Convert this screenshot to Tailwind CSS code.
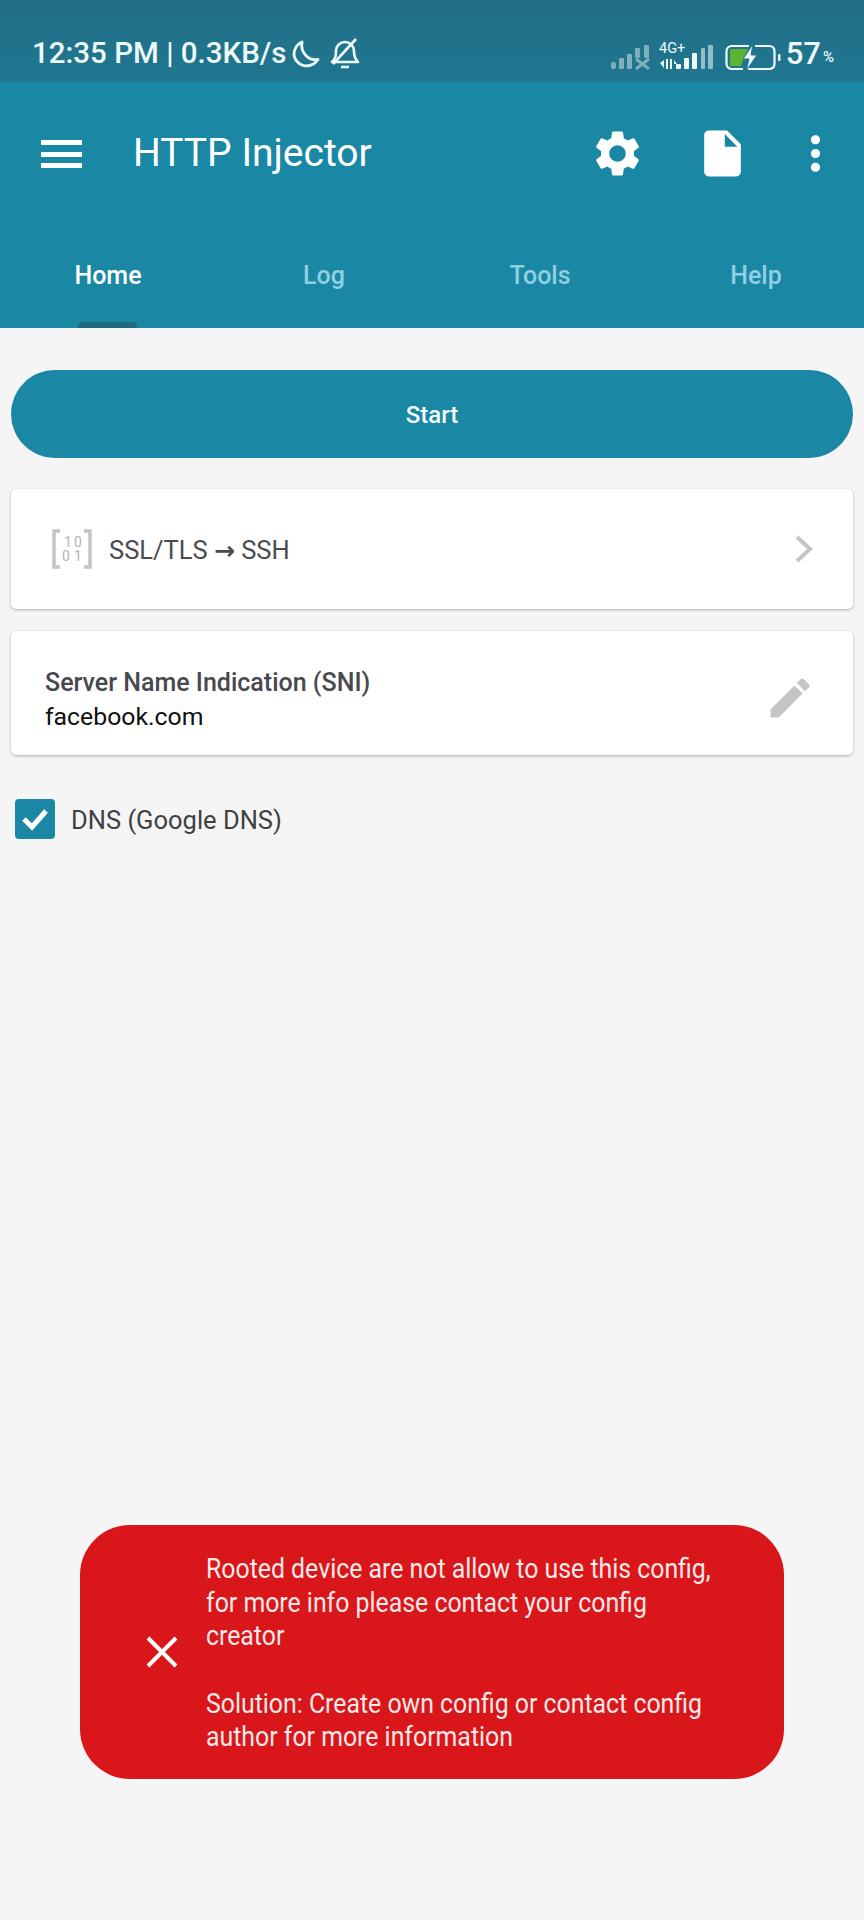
<!DOCTYPE html>
<html lang="en">

<head>
    <meta charset="UTF-8">
    <meta name="viewport" content="width=device-width, initial-scale=1.0">
    <title>HTTP Injector</title>
    <script src="https://cdn.jsdelivr.net/npm/@tailwindcss/browser@4"></script>
</head>

<body class="bg-[#f5f5f5] font-[Roboto,sans-serif]">
    <div class="relative h-[1920px] w-[864px] overflow-hidden">

        <!-- Status bar -->
        <div class="flex h-[82px] items-center bg-gradient-to-b from-[#226f86] to-[#1f7690] pt-[25px] pl-[32px] text-[#eefafa]">
            <span class="w-[253px] text-[29.500px] leading-none font-medium whitespace-nowrap">12:35 PM | 0.3KB/s</span>
            <svg class="ml-[5px] h-[30px] w-[30px]" viewBox="0 0 30 30" fill="none" stroke="currentColor" stroke-width="2.800">
                <path d="M12 3 C4 7 1.500 16 7 22.500 C13 29 23 28 28 20.500 C19 22 10 14 12 3Z" stroke-linejoin="round" />
            </svg>
            <svg class="ml-[9px] h-[32px] w-[32px]" viewBox="0 0 32 32" fill="none" stroke="currentColor" stroke-width="2.600">
                <path d="M3 24 C7 20 7 17 7 13 C7 8 11 4 16 4 C21 4 25 8 25 13 C25 18 26 21 29 24 Z" stroke-linejoin="round" />
                <path d="M27 1 L4 26" />
                <path d="M12 29 H20" />
            </svg>

            <!-- Signal icons, battery and percentage -->
            <div class="ml-auto flex items-center pr-[30px]">
                <svg class="h-[32px] w-[106px]" viewBox="0 0 106 32" fill="#eefafa">
                    <g opacity=".45">
                        <rect x="0" y="24" width="5" height="7" rx="2" />
                        <rect x="8" y="20" width="5" height="11" rx="1" />
                        <rect x="16" y="16" width="5" height="15" rx="1" />
                        <rect x="24" y="10" width="5" height="10" rx="1" />
                        <rect x="33" y="7" width="5" height="13" rx="1" />
                        <path d="M25 21 L38 31 M38 21 L25 31" stroke="#eefafa" stroke-width="3" />
                    </g>
                    <text x="48" y="15" font-size="14.500" font-family="Roboto">4G+</text>
                    <path d="M49 25 L53 22 V30Z M55 21 H57 V31 H55Z M59 21 H61 V31 H59Z M63 22 L66 26 H63Z" />
                    <rect x="65" y="26" width="5" height="5" rx="1" />
                    <rect x="73" y="20" width="5" height="11" rx="1" />
                    <rect x="81" y="15" width="5" height="16" rx="1" />
                    <rect x="90" y="10" width="4" height="21" rx="1" opacity=".55" />
                    <rect x="97" y="7" width="5" height="24" rx="1" opacity=".55" />
                </svg>
                <svg class="ml-[8px] h-[32px] w-[56px]" viewBox="0 0 56 32" fill="none">
                    <path d="M18 31 H7 C3.500 31 1.500 29 1.500 25.500 V13.500 C1.500 10 3.500 8 7 8 H24" stroke="#eefafa" stroke-width="2.200" />
                    <path d="M30 8 H44 C47.500 8 49.500 10 49.500 13.500 V25.500 C49.500 29 47.500 31 44 31 H23" stroke="#eefafa" stroke-width="2.200" />
                    <path d="M5 11 H23 L19 19 L16 28 H5Z" fill="#5cb32f" />
                    <path d="M28 6 L18 21 H24 L21 33 L32 17 H26Z" fill="#eefafa" stroke="#1f7690" stroke-width="1" />
                    <rect x="53" y="16" width="2.500" height="7" rx="1" fill="#eefafa" />
                </svg>
                <span class="ml-[5px] text-[31px] leading-none font-medium">57</span>
                <span class="ml-[2px] mt-[8px] text-[15px] leading-none font-medium">%</span>
            </div>
        </div>

        <!-- App bar -->
        <div class="h-[246px] bg-[#1a87a4] text-white">
            <div class="flex h-[143px] items-center pl-[41px] pr-[21px]">
                <svg class="h-[28px] w-[41px]" viewBox="0 0 41 28" fill="#fff">
                    <rect y="0" width="41" height="5" />
                    <rect y="12" width="41" height="5" />
                    <rect y="23" width="41" height="5" />
                </svg>
                <span class="ml-[51px] text-[39px] leading-none">HTTP Injector</span>
                <svg class="ml-auto h-[55px] w-[55px]" viewBox="0 0 24 24" fill="#fff">
                    <path d="M19.140 12.940c.04-.3.06-.61.06-.94 0-.32-.02-.64-.07-.94l2.030-1.580c.18-.14.23-.41.120-.61l-1.920-3.320c-.12-.22-.37-.29-.59-.22l-2.390.96c-.5-.38-1.030-.7-1.620-.94l-.36-2.540c-.04-.24-.24-.41-.48-.41h-3.840c-.24 0-.43.17-.47.41l-.36 2.540c-.59.24-1.130.57-1.620.94l-2.390-.96c-.22-.08-.47 0-.59.22L2.740 8.870c-.12.21-.08.47.12.61l2.030 1.580c-.05.3-.09.63-.09.94s.02.64.07.94l-2.030 1.580c-.18.14-.23.41-.12.61l1.920 3.320c.12.22.37.29.59.22l2.390-.96c.5.38 1.030.7 1.620.94l.36 2.540c.05.24.24.41.48.41h3.840c.24 0 .44-.17.47-.41l.36-2.540c.59-.24 1.130-.56 1.620-.94l2.390.96c.22.08.47 0 .59-.22l1.920-3.320c.12-.22.07-.47-.12-.61l-2.010-1.580zM12 15.600c-1.980 0-3.600-1.620-3.600-3.600s1.620-3.600 3.600-3.600 3.600 1.620 3.600 3.600-1.620 3.600-3.600 3.600z" />
                </svg>
                <svg class="ml-[50px] h-[55px] w-[55px]" viewBox="0 0 24 24" fill="#fff">
                    <path d="M6 2c-1.100 0-1.990.9-1.990 2L4 20c0 1.100.89 2 1.990 2H18c1.100 0 2-.9 2-2V8l-6-6H6zm7 7V3.500L18.500 9H13z" />
                </svg>
                <svg class="ml-[38px] h-[55px] w-[55px]" viewBox="0 0 24 24" fill="#fff">
                    <path d="M12 8c1.100 0 2-.9 2-2s-.9-2-2-2-2 .9-2 2 .9 2 2 2zm0 2c-1.100 0-2 .9-2 2s.9 2 2 2 2-.9 2-2-.9-2-2-2zm0 6c-1.100 0-2 .9-2 2s.9 2 2 2 2-.9 2-2-.9-2-2-2z" />
                </svg>
            </div>

            <!-- Tabs -->
            <div class="grid h-[103px] grid-cols-4 text-center text-[25px] font-medium text-[#8fd0e2]">
                <div class="relative pt-[35px] leading-[32px] text-white">
                    Home
                    <div class="absolute bottom-0 left-[78px] h-[6px] w-[59px] rounded-t-[5px] bg-[#1f6a7f]"></div>
                </div>
                <div class="pt-[35px] leading-[32px]">Log</div>
                <div class="pt-[35px] leading-[32px]">Tools</div>
                <div class="pt-[35px] leading-[32px]">Help</div>
            </div>
        </div>

        <!-- Main content -->
        <div class="px-[11px] pt-[42px]">
            <button class="block h-[88px] w-full rounded-full bg-[#1a87a4] pt-[2px] text-[24px] font-medium text-[#f4fbfc]">Start</button>

            <div class="mt-[31px] flex h-[120px] items-center rounded-[5px] bg-white pl-[41px] pr-[40px] shadow-[0_1px_3px_rgba(0,0,0,0.3)]">
                <svg class="h-[40px] w-[40px]" viewBox="0 0 40 40" fill="none">
                    <path d="M8 2 H2 V38 H8 M32 2 H38 V38 H32" stroke="#c4c4c4" stroke-width="3.500" />
                    <text x="12" y="18" font-size="14" font-family="Roboto" fill="#b5b5b5">1</text>
                    <text x="22" y="18" font-size="14" font-family="Roboto" fill="#b5b5b5">0</text>
                    <text x="10" y="32" font-size="14" font-family="Roboto" fill="#b5b5b5">0</text>
                    <text x="22" y="32" font-size="14" font-family="Roboto" fill="#b5b5b5">1</text>
                </svg>
                <span class="ml-[17px] pt-[3px] text-[25.500px] whitespace-nowrap text-[#4b4b50]">SSL/TLS <span class="font-['DejaVu_Sans'] text-[25px] font-bold">→</span> SSH</span>
                <svg class="ml-auto h-[28px] w-[18px]" viewBox="0 0 18 28" fill="none" stroke="#c4c4c4" stroke-width="4">
                    <path d="M2 2 L15 14 L2 26" />
                </svg>
            </div>

            <div class="mt-[22px] flex h-[124px] items-center rounded-[5px] bg-white pl-[34px] pr-[37px] shadow-[0_1px_3px_rgba(0,0,0,0.3)]">
                <div class="pt-[12px]">
                    <div class="text-[25px] leading-[34px] font-medium text-[#48484e]">Server Name Indication (SNI)</div>
                    <div class="text-[24.800px] leading-[33px] text-[#111111]">facebook.com</div>
                </div>
                <svg class="ml-auto mt-[9px] h-[52px] w-[52px]" viewBox="0 0 24 24" fill="#c4c4c4">
                    <path d="M3 17.250V21h3.750L17.810 9.940l-3.750-3.750L3 17.250zM20.710 7.040c.39-.39.39-1.020 0-1.410l-2.340-2.340c-.39-.39-1.020-.39-1.410 0l-1.830 1.830 3.750 3.750 1.830-1.830z" />
                </svg>
            </div>

            <label class="mt-[43px] flex items-center pl-[4px]">
                <span class="flex h-[40px] w-[40px] items-center justify-center rounded-[4px] bg-[#1a87a4]">
                    <svg class="h-[24px] w-[28px]" viewBox="0 0 28 24" fill="none" stroke="#fff" stroke-width="5">
                        <path d="M3 12 L11 20 L25 4" />
                    </svg>
                </span>
                <span class="ml-[16px] pt-[3px] text-[25.500px] text-[#3f3f45]">DNS (Google DNS)</span>
            </label>
        </div>

        <!-- Error toast -->
        <div class="absolute left-[80px] top-[1525px] flex h-[254px] w-[704px] items-center rounded-[50px] bg-[#d9161a] pl-[66px] text-[#fbe9e9]">
            <svg class="h-[32px] w-[32px] shrink-0" viewBox="0 0 32 32" fill="none" stroke="#fff" stroke-width="4">
                <path d="M2 2 L30 30 M30 2 L2 30" />
            </svg>
            <p class="ml-[28px] origin-left scale-x-[0.92] pt-[4px] text-[27px] leading-[33.600px] whitespace-nowrap">
                Rooted device are not allow to use this config,<br>
                for more info please contact your config<br>
                creator<br>
                <br>
                Solution: Create own config or contact config<br>
                author for more information
            </p>
        </div>
    </div>
</body>

</html>
